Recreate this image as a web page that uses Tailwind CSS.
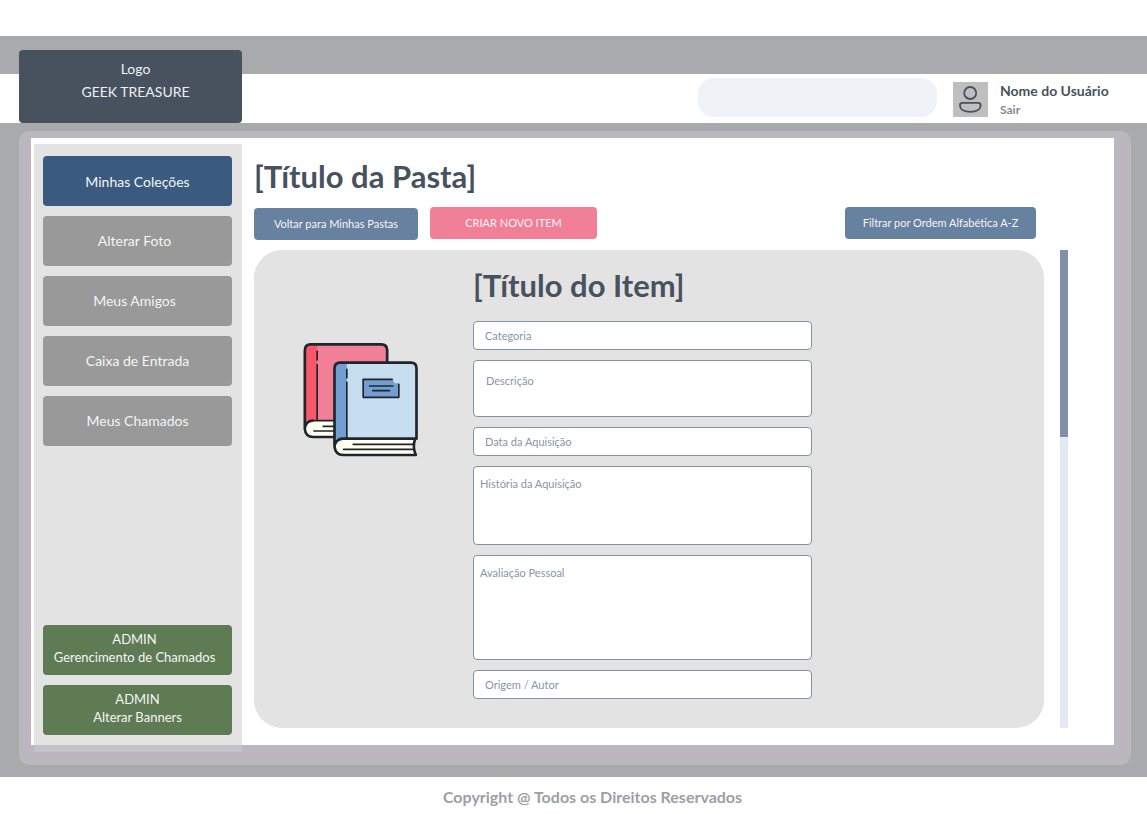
<!DOCTYPE html>
<html lang="pt-BR">
<head>
<meta charset="utf-8">
<meta name="viewport" content="width=device-width, initial-scale=1">
<title>Geek Treasure</title>
<script src="https://cdn.jsdelivr.net/npm/@tailwindcss/browser@4"></script>
</head>
<body class="bg-white font-['Lato',sans-serif] text-[#48525e]">
<header class="pt-9">
  <div class="h-[38px] bg-[#a8aaac]"></div>
  <div class="flex h-[49px] items-end pl-[19px] pr-9">
    <a href="#" class="flex h-[73px] w-[223px] flex-col items-center rounded bg-[#48525e] pl-[10px] pt-[7px] text-center text-[14px] leading-[23px] text-[#edf0f4]"><span>Logo</span><span>GEEK TREASURE</span></a>
    <div class="ml-auto flex h-full pt-1">
      <input type="search" aria-label="Pesquisar" class="h-[39px] w-[239px] rounded-2xl bg-[#eff3f8] px-4 text-sm outline-none">
      <div class="ml-4 mt-1 flex size-[35px] items-center justify-center bg-[#bfbfbf]">
        <svg class="size-[35px]" viewBox="0 0 35 35" fill="none" stroke="#48525e" stroke-width="1.8" role="img" aria-label="Foto do usuário"><circle cx="17.2" cy="11" r="6"/><path d="M9.4 20.8H25.2Q27.6 20.8 27.6 23.2C27.6 27.6 23 29.8 17.3 29.8S7 27.6 7 23.2Q7 20.8 9.4 20.8Z"/></svg>
      </div>
      <div class="ml-3 mt-[2px] min-w-[111px]">
        <p class="text-[14px] font-bold leading-[22px]">Nome do Usuário</p>
        <button type="button" class="block text-[12px] font-bold leading-4 text-[#858a90]">Sair</button>
      </div>
    </div>
  </div>
</header>

<main class="bg-[#a8aaac] pb-3 pl-[19px] pr-4 pt-2">
  <div class="rounded-[10px] bg-[#bab7bf] pb-5 pl-3 pr-[17px] pt-[7px]">
    <div class="flex bg-white pl-[3px] pt-[6px]">
      <nav aria-label="Menu" class="-mb-[7px] flex w-[208px] shrink-0 flex-col gap-[10px] bg-[#cbcbcb]/54 pb-[17px] pl-[9px] pr-[10px] pt-3 text-[14px] text-[#f4f5f6]">
        <button type="button" class="h-[50px] rounded bg-[#3a5a80]">Minhas Coleções</button>
        <button type="button" class="h-[50px] rounded bg-[#999] pb-[2px] pr-[6px]">Alterar Foto</button>
        <button type="button" class="h-[50px] rounded bg-[#999] pb-[2px] pr-[6px]">Meus Amigos</button>
        <button type="button" class="h-[50px] rounded bg-[#999] pb-[2px]">Caixa de Entrada</button>
        <button type="button" class="h-[50px] rounded bg-[#999] pb-[2px]">Meus Chamados</button>
        <button type="button" class="mt-auto h-[50px] rounded bg-[#5f7b53] pb-1 pr-[6px] text-[13px] leading-[18px]">ADMIN<br>Gerencimento de Chamados</button>
        <button type="button" class="h-[50px] rounded bg-[#5f7b53] pb-1 text-[13px] leading-[18px]">ADMIN<br>Alterar Banners</button>
      </nav>

      <section class="flex min-w-0 flex-1 flex-col pb-[17px] pl-3 pr-[46px] pt-3">
        <h1 class="text-[31px] font-bold leading-10">[Título da Pasta]</h1>
        <div class="mt-[11px] flex pr-8 text-[11px] text-[#f4f5f6]">
          <button type="button" class="mt-px h-8 w-[164px] rounded bg-[#6781a0]">Voltar para Minhas Pastas</button>
          <button type="button" class="ml-3 h-8 w-[167px] rounded bg-[#f27f98]">CRIAR NOVO ITEM</button>
          <button type="button" class="ml-auto h-8 w-[191px] rounded bg-[#6781a0]">Filtrar por Ordem Alfabética A-Z</button>
        </div>
        <div class="mt-[10px] flex gap-4">
          <article class="grid flex-1 grid-cols-[219px_339fr_232fr] rounded-[28px] bg-[#e3e3e3] pb-[29px] pt-[15px]">
            <div class="pl-[48px] pt-[77px]">
              <svg class="h-[115px] w-[117px]" viewBox="38 36 348 345" role="img" aria-label="Livros" stroke="#20242c" stroke-linecap="round" stroke-linejoin="round">
                <path d="M62 43H274Q292 43 292 61V321H66Q45 318 45 297V62Q45 43 62 43Z" fill="#f27f98" stroke="none"/>
                <path d="M62 43H82V272H45V62Q45 43 62 43Z" fill="#f9586b" stroke="none"/>
                <path d="M136 272H66Q45 275 45 297Q47 321 70 321H136Z" fill="#fffff2" stroke="none"/>
                <path d="M82 64V90M82 104V270" fill="none" stroke-width="5"/>
                <path d="M134 272H68M100 289H132M72 303H132" fill="none" stroke-width="5"/>
                <path d="M292 96V61Q292 43 274 43H62Q45 43 45 62V297Q47 321 70 321H134M45 294Q48 274 68 272" fill="none" stroke-width="8"/>
                <path d="M151 98H363Q380 98 380 115V326H134V115Q134 98 151 98Z" fill="#c7ddf0" stroke="none"/>
                <path d="M151 98H171V326H134V115Q134 98 151 98Z" fill="#719fd1" stroke="none"/>
                <path d="M156 326H376Q366 350 378 375H158Q134 371 134 350Q136 328 156 326Z" fill="#fffff2" stroke="none"/>
                <path d="M171 118V143M171 157V324" fill="none" stroke-width="5"/>
                <path d="M380 326V115Q380 98 363 98H151Q134 98 134 115V350Q137 375 160 375H378Q367 350 376 326H158Q136 328 134 350" fill="none" stroke-width="8"/>
                <path d="M190 343H368M161 358H368" fill="none" stroke-width="5"/>
                <path d="M220 148H308L314 160H327V202H220Z" fill="#719fd1" stroke="none"/>
                <path d="M307 148H220V202H327V163M239 168H309M249 182H299" fill="none" stroke-width="5"/>
              </svg>
            </div>
            <form class="flex flex-col gap-[10px] text-[11px]">
              <h2 class="mb-[6px] text-[31px] font-bold leading-10">[Título do Item]</h2>
              <input type="text" aria-label="Categoria" placeholder="Categoria" class="h-[29px] w-full rounded border border-[#8592a6] bg-white px-[11px] placeholder:text-[#8795ab]">
              <textarea aria-label="Descrição" placeholder="Descrição" class="block h-[57px] w-full resize-none rounded border border-[#8592a6] bg-white px-3 pt-3 leading-4 placeholder:text-[#8795ab]"></textarea>
              <input type="text" aria-label="Data da Aquisição" placeholder="Data da Aquisição" class="h-[29px] w-full rounded border border-[#8592a6] bg-white px-[11px] placeholder:text-[#8795ab]">
              <textarea aria-label="História da Aquisição" placeholder="História da Aquisição" class="block h-[79px] w-full resize-none rounded border border-[#8592a6] bg-white px-[6px] pt-[9px] leading-4 placeholder:text-[#8795ab]"></textarea>
              <textarea aria-label="Avaliação Pessoal" placeholder="Avaliação Pessoal" class="block h-[105px] w-full resize-none rounded border border-[#8592a6] bg-white px-[6px] pt-[9px] leading-4 placeholder:text-[#8795ab]"></textarea>
              <input type="text" aria-label="Origem / Autor" placeholder="Origem / Autor" class="h-[29px] w-full rounded border border-[#8592a6] bg-white px-[11px] placeholder:text-[#8795ab]">
            </form>
          </article>
          <div class="w-2 bg-[#e3e8f2]"><div class="h-[187px] bg-[#8190a8]"></div></div>
        </div>
      </section>
    </div>
  </div>
</main>
<footer class="pb-1 pl-[38px] pt-2 text-center text-[16px] font-bold leading-6 text-[#9b9fa6]">Copyright @ Todos os Direitos Reservados</footer>
</body>
</html>
